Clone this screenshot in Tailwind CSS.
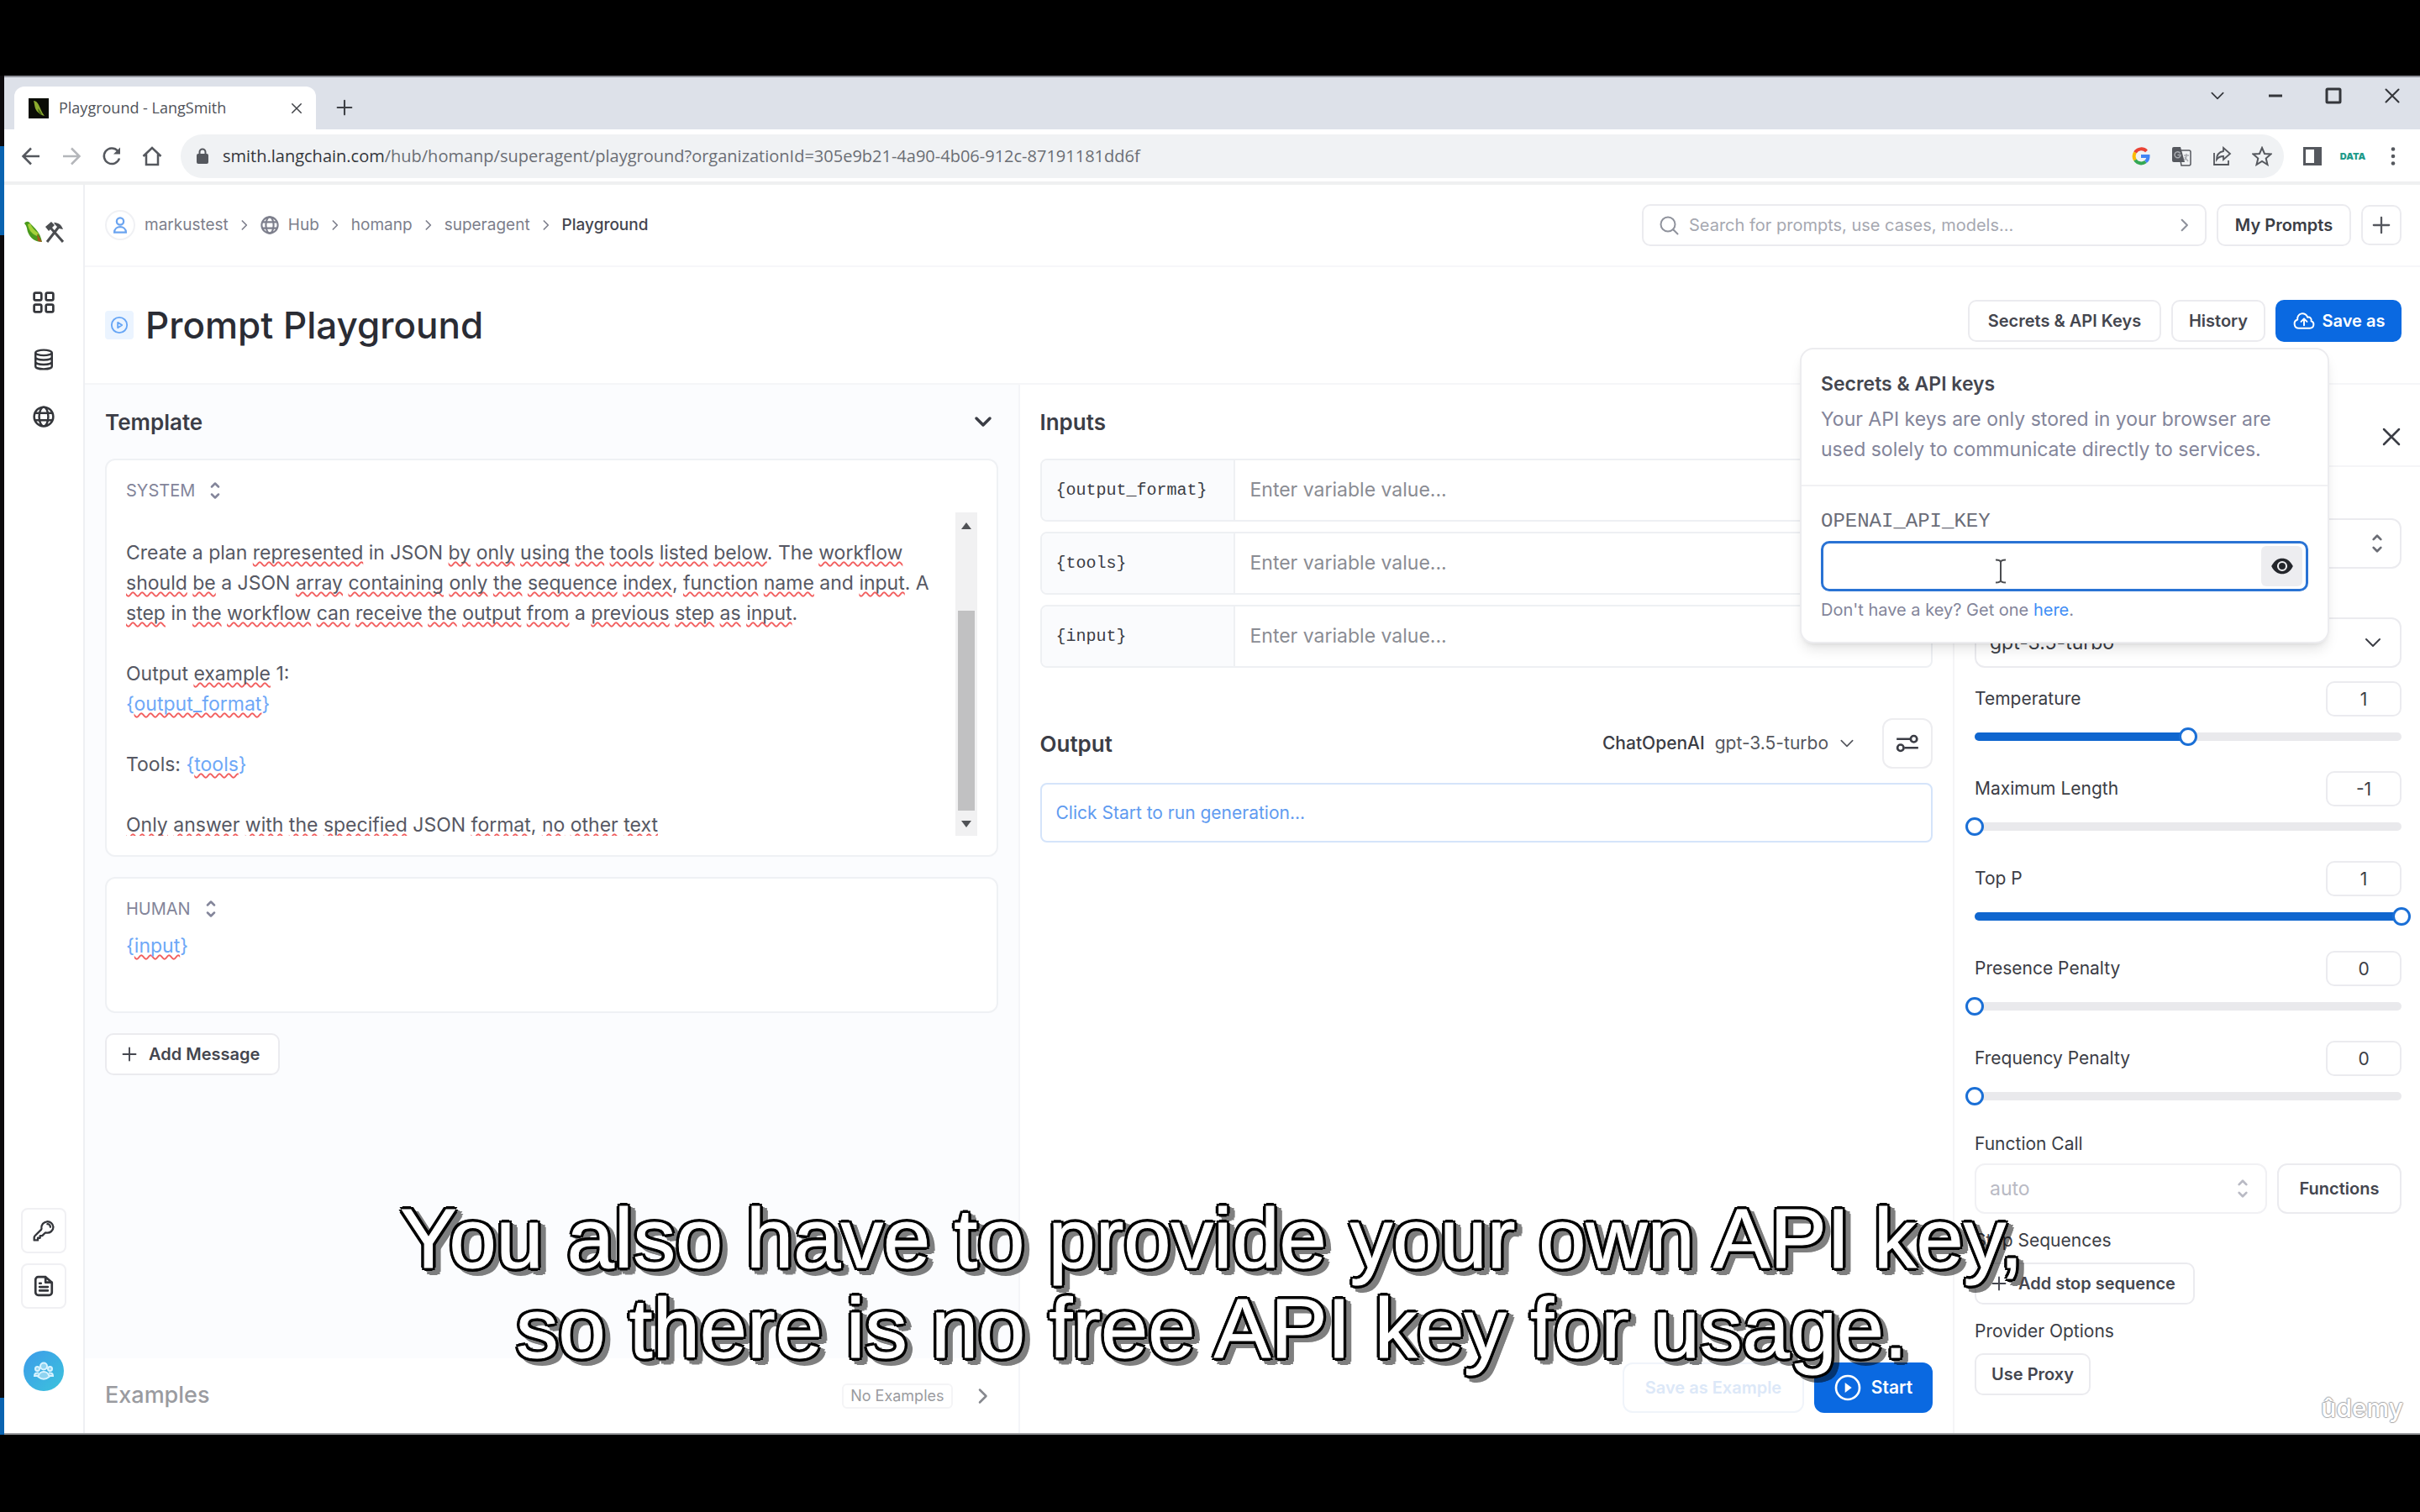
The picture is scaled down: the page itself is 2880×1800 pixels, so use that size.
<!DOCTYPE html>
<html lang="en">
<head>
<meta charset="utf-8">
<title>Playground - LangSmith</title>
<script src="https://cdn.jsdelivr.net/npm/@tailwindcss/browser@4"></script>
</head>
<body class="bg-black">
<svg class="hidden" aria-hidden="true">
  <symbol id="updown" viewBox="0 0 24 24" fill="none" stroke="currentColor" stroke-width="2.500" stroke-linecap="round" stroke-linejoin="round"><path d="M8 7.500 12 3.500l4 4M8 16.500l4 4 4-4"/></symbol>
  <symbol id="down" viewBox="0 0 24 24" fill="none" stroke="currentColor" stroke-width="2" stroke-linecap="round" stroke-linejoin="round"><path d="m4 8 8 8 8-8"/></symbol>
  <symbol id="right" viewBox="0 0 24 24" fill="none" stroke="currentColor" stroke-width="2.500" stroke-linecap="round" stroke-linejoin="round"><path d="m8 4.500 7.500 7.500L8 19.500"/></symbol>
  <symbol id="plus" viewBox="0 0 24 24" fill="none" stroke="currentColor" stroke-width="2.500" stroke-linecap="round"><path d="M12 2v20M2 12h20"/></symbol>
  <symbol id="cross" viewBox="0 0 24 24" fill="none" stroke="currentColor" stroke-width="2.500" stroke-linecap="round"><path d="m3 3 18 18M21 3 3 21"/></symbol>
  <symbol id="globe" viewBox="0 0 24 24" fill="none" stroke="currentColor" stroke-width="2.300"><circle cx="12" cy="12" r="10.500"/><ellipse cx="12" cy="12" rx="5" ry="10.500"/><path d="M2.500 8h19M2.500 16h19"/></symbol>
</svg>
<div class="relative flex min-h-screen flex-col pt-[90px] pb-[92px] font-['Inter',sans-serif] text-[23px] text-[#3b3d45]">
  <div class="flex flex-1">

    <!-- desktop showing behind the browser window -->
    <div class="flex w-[5px] shrink-0 flex-col bg-[#0c0a0d]">
      <div class="mt-[84px] h-[106px] bg-[#0a63b0]"></div>
      <div class="mt-auto h-11 bg-[#0a63b0]"></div>
    </div>

    <div class="flex min-w-0 flex-1 flex-col border-t-2 border-[#8e9099] bg-white">
      <!-- tab strip -->
      <div class="flex h-[62px] items-end justify-between bg-[#dde1e9] font-['Open_Sans','Noto_Sans',sans-serif]">
        <div class="flex h-full items-end pl-3">
          <div class="flex h-[51px] w-[359px] items-center rounded-t-xl bg-white pr-4 pl-[17px]">
            <svg class="h-6 w-6 bg-[#0b0d06]" viewBox="0 0 24 24"><path d="M6 3c4 0 6 4 8 9s3 6 5 9c-4-1-9-4-11-9-1-3-1-6-2-9z" fill="#8cab2e"/><path d="M11 12c3 3 4 5 5 8-3-1-5-4-5-8z" fill="#4d6a1a"/></svg>
            <span class="ml-3 text-[18px] text-[#50535a]">Playground - LangSmith</span>
            <button class="ml-auto" aria-label="Close tab"><svg class="size-[14px] text-[#3f4146]"><use href="#cross"/></svg></button>
          </div>
          <button class="mb-4 ml-6" aria-label="New tab"><svg class="size-5 text-[#3f4146]"><use href="#plus"/></svg></button>
        </div>
        <div class="mb-[30px] flex items-center gap-[50px] pr-[23px] text-[#34363b]">
          <button aria-label="Search tabs"><svg class="size-5"><use href="#down"/></svg></button>
          <button aria-label="Minimize"><svg class="h-5 w-[18px]" viewBox="0 0 18 20"><path d="M1 10h16" stroke="currentColor" stroke-width="3"/></svg></button>
          <button aria-label="Maximize"><svg class="size-5" viewBox="0 0 20 20"><rect x="2" y="2" width="16" height="16" rx="1" fill="none" stroke="currentColor" stroke-width="3"/></svg></button>
          <button aria-label="Close"><svg class="size-5"><use href="#cross"/></svg></button>
        </div>
      </div>

      <!-- address bar -->
      <div class="flex h-[66px] items-center border-b-4 border-[#eff0f1] pt-[2px] pr-5 pl-5 text-[#55585e]">
        <div class="flex w-[190px] shrink-0 items-center gap-6">
          <button aria-label="Back"><svg class="size-6" viewBox="0 0 24 24" fill="none" stroke="currentColor" stroke-width="2.500"><path d="M22 12H3M12 2.500 2.500 12l9.500 9.500"/></svg></button>
          <button aria-label="Forward" class="text-[#b4b6ba]"><svg class="size-6" viewBox="0 0 24 24" fill="none" stroke="currentColor" stroke-width="2.500"><path d="M2 12h19M12 2.500l9.500 9.500-9.500 9.500"/></svg></button>
          <button aria-label="Reload"><svg class="size-6" viewBox="0 0 24 24" fill="none" stroke="currentColor" stroke-width="2.500"><path d="M21 14.500A9.300 9.300 0 1 1 19 5.500"/><path d="M22 1.500v8h-8z" fill="currentColor" stroke="none"/></svg></button>
          <button aria-label="Home"><svg class="size-6" viewBox="0 0 24 24" fill="none" stroke="currentColor" stroke-width="2.500"><path d="M1.500 12 12 2l10.500 10M5 9.500V22h14V9.500"/></svg></button>
        </div>
        <div class="flex h-[52px] min-w-0 flex-1 items-center rounded-full bg-[#f0f2f4] pr-[14px] pl-[18px]">
          <svg class="h-5 w-4 shrink-0" viewBox="0 0 16 20"><rect x="1" y="7" width="14" height="12" rx="2" fill="currentColor"/><path d="M4.500 8V5a3.500 3.500 0 0 1 7 0v3" fill="none" stroke="currentColor" stroke-width="2"/></svg>
          <p class="ml-4 flex-1 truncate font-['Open_Sans','Noto_Sans',sans-serif] text-[20px] text-[#6b6e74]"><span class="text-[#34363b]">smith.langchain.com</span>/hub/homanp/superagent/playground?organizationId=305e9b21-4a90-4b06-912c-87191181dd6f</p>
          <div class="flex items-center gap-6">
            <svg class="size-6" viewBox="0 0 24 24" fill="none" stroke-width="4"><path d="M18.500 6A8.500 8.500 0 0 0 5 7.500" stroke="#ea4335"/><path d="M5 7.500a8.500 8.500 0 0 0 0 9" stroke="#fbbc05"/><path d="M5 16.500a8.500 8.500 0 0 0 12.500 2" stroke="#34a853"/><path d="M17.500 18.500a8 8 0 0 0 3-6.500H12" stroke="#4285f4"/></svg>
            <svg class="size-6" viewBox="0 0 24 24"><path d="M9 5h12a2 2 0 0 1 2 2v14a2 2 0 0 1-2 2h-9z" fill="none" stroke="currentColor" stroke-width="1.500"/><path d="M3 1h8l5 18H3a2 2 0 0 1-2-2V3a2 2 0 0 1 2-2z" fill="currentColor"/><path d="M10.500 8.500A3.500 3.500 0 1 0 11 10.500H7.500M15 11h6M18 9v2c0 3-1.500 5-3 6M16 13l4 5" fill="none" stroke="#aaadb2" stroke-width="1.500"/></svg>
            <svg class="size-6" viewBox="0 0 24 24" fill="none" stroke="currentColor" stroke-width="1.800"><path d="M3 8v14h17v-5"/><path d="M14 2l8 7-8 7v-4c-4 0-6 1-8 4 0-6 3-9 8-10z"/></svg>
            <svg class="size-6" viewBox="0 0 24 24" fill="none" stroke="currentColor" stroke-width="2"><path d="m12 2 3 7 7.500.500-5.800 5 1.800 7.500-6.500-4-6.500 4 1.800-7.500-5.800-5L9 9z"/></svg>
          </div>
        </div>
        <div class="ml-[22px] flex items-center gap-5">
          <svg class="size-6" viewBox="0 0 24 24"><rect x="2.500" y="2.500" width="19" height="19" fill="none" stroke="currentColor" stroke-width="3"/><path d="M14 2h8v20h-8z" fill="currentColor"/></svg>
          <span class="w-8 text-center text-[11px] leading-3 font-black text-[#1d9a8a]">DATA</span>
          <svg class="h-6 w-6" viewBox="0 0 24 24" fill="currentColor"><circle cx="12" cy="3.500" r="2.300"/><circle cx="12" cy="12" r="2.300"/><circle cx="12" cy="20.500" r="2.300"/></svg>
        </div>
      </div>

      <div class="flex flex-1">
        <!-- sidebar -->
        <nav class="flex w-24 shrink-0 flex-col items-center border-r-2 border-[#eef0f3] pt-[38px] pb-[50px] text-[#34363b]">
          <svg class="h-9 w-12" viewBox="0 0 48 36"><path d="M1 8c2-3 5-3 7 0 6 6 12 11 14 22-8 0-14-4-17-12C4 14 4 11 1 8z" fill="#4a9a1c"/><path d="M8 8c2 5 5 8 10 12l-2 3C9 20 6 15 5 9z" fill="#a5d13a"/><path d="M16 20l6 10-5-1z" fill="#a8551c"/><path d="m28 30 14-18M47 30 32 13" stroke="#4b4d50" stroke-width="3"/><path d="m26 12 7-6 4 4-7 7zM36 7c5 0 9 2 11 8l-5-1-4-4z" fill="#4b4d50"/></svg>
          <div class="mt-[53px] flex flex-col gap-[42px]">
            <a href="#" aria-label="Projects"><svg class="size-[26px]" viewBox="0 0 24 24" fill="none" stroke="currentColor" stroke-width="2.500"><rect x="1.500" y="1.500" width="8" height="8" rx="1.500"/><rect x="14.500" y="1.500" width="8" height="8" rx="1.500"/><rect x="1.500" y="14.500" width="8" height="8" rx="1.500"/><rect x="14.500" y="14.500" width="8" height="8" rx="1.500"/></svg></a>
            <a href="#" aria-label="Datasets"><svg class="size-[26px]" viewBox="0 0 24 24" fill="none" stroke="currentColor" stroke-width="2.300"><ellipse cx="12" cy="4.500" rx="9" ry="3"/><path d="M3 4.500v15c0 4 18 4 18 0v-15M3 9.500c0 4 18 4 18 0M3 14.500c0 4 18 4 18 0"/></svg></a>
            <a href="#" aria-label="Hub"><svg class="size-[26px]"><use href="#globe"/></svg></a>
          </div>
          <div class="mt-auto flex flex-col items-center gap-3">
            <button class="flex h-[54px] w-[54px] items-center justify-center rounded-lg border-2 border-[#f0f0f3]" aria-label="API keys"><svg class="size-7" viewBox="0 0 24 24" fill="none" stroke="currentColor" stroke-width="2" stroke-linecap="round" stroke-linejoin="round"><path d="M15.800 5.300a3 3 0 0 1 3 3m3 0a6 6 0 0 1-7 5.900c-.600-.100-1.200 0-1.600.400L10.500 17.300H8.300v2.200H6v2.300H2.300v-2.800c0-.600.200-1.200.700-1.600l6.400-6.400c.400-.400.500-1 .400-1.600a6 6 0 1 1 12-1.100z"/></svg></button>
            <button class="flex h-[54px] w-[54px] items-center justify-center rounded-lg border-2 border-[#f0f0f3]" aria-label="Documentation"><svg class="size-[26px]" viewBox="0 0 24 24" fill="none" stroke="currentColor" stroke-width="2.500" stroke-linecap="round" stroke-linejoin="round"><path d="M14 2H6a3 3 0 0 0-3 3v14a3 3 0 0 0 3 3h12a3 3 0 0 0 3-3V8zM14 2v6h7M7.500 9H9M7.500 13h9M7.500 17h9"/></svg></button>
            <button class="mt-[38px] flex size-12 items-center justify-center rounded-full bg-linear-to-br from-[#3d9be9] to-[#3cc3dc]" aria-label="Account"><svg class="size-6" viewBox="0 0 24 24" fill="#8fd3f0" stroke="#d9f3ff" stroke-width="2"><circle cx="4.500" cy="9.500" r="2.500"/><circle cx="19.500" cy="9.500" r="2.500"/><path d="M6 18H1c0-3 2-4 5-3.500M18 18h5c0-3-2-4-5-3.500"/><path d="M5.500 19c1-8 12-8 13 0-4 3.500-9 3.500-13 0z"/><circle cx="12" cy="6.500" r="4"/></svg></button>
          </div>
        </nav>

        <div class="flex min-w-0 flex-1 flex-col">
          <!-- breadcrumb header -->
          <header class="flex h-[98px] items-center justify-between border-b-2 border-[#f7f7f9] pr-[22px] pl-6">
            <nav class="flex items-center gap-[11px] text-[19px] text-[#7d7f8c]" aria-label="Breadcrumb">
              <span class="flex size-9 items-center justify-center rounded-full border-2 border-[#f0f1f4]"><svg class="size-[22px]" viewBox="0 0 24 24" fill="none" stroke="#6ba4f0" stroke-width="2.500"><circle cx="12" cy="7" r="4.500"/><path d="M4.500 21.500c0-9.500 15-9.500 15 0z"/></svg></span>
              <a href="#">markustest</a>
              <svg class="size-4"><use href="#right"/></svg>
              <a href="#" class="flex items-center gap-[11px]"><svg class="size-[22px]"><use href="#globe"/></svg>Hub</a>
              <svg class="size-4"><use href="#right"/></svg>
              <a href="#">homanp</a>
              <svg class="size-4"><use href="#right"/></svg>
              <a href="#">superagent</a>
              <svg class="size-4"><use href="#right"/></svg>
              <span class="font-medium text-[#44464f]">Playground</span>
            </nav>
            <div class="flex items-center gap-3">
              <label class="flex h-[50px] w-[672px] items-center rounded-[10px] border-2 border-[#ebebef] px-[18px] text-[#8f929c]">
                <svg class="mr-3 size-6 shrink-0" viewBox="0 0 24 24" fill="none" stroke="currentColor" stroke-width="2" stroke-linecap="round"><circle cx="11" cy="11" r="8.500"/><path d="m17.500 17.500 5 5"/></svg>
                <input type="search" aria-label="Search" placeholder="Search for prompts, use cases, models..." class="min-w-0 flex-1 text-[20px] outline-none placeholder:text-[#a6a8b1]">
                <svg class="-mr-1 size-5"><use href="#right"/></svg>
              </label>
              <button class="h-[50px] w-40 rounded-[10px] border-2 border-[#ebebef] text-[20px] font-semibold">My Prompts</button>
              <button class="flex size-[48px] items-center justify-center rounded-[10px] border-2 border-[#ebebef] text-[#55575e]" aria-label="New prompt"><svg class="size-[22px]"><use href="#plus"/></svg></button>
            </div>
          </header>

          <!-- title row -->
          <div class="relative z-10 flex h-[140px] items-center justify-between border-b-2 border-[#f5f6f8] pr-[22px] pl-6">
            <div class="flex items-center gap-[14px]">
              <span class="flex size-[34px] items-center justify-center rounded bg-[#ebf4ff]"><svg class="size-[22px]" viewBox="0 0 24 24" fill="none" stroke="#66a5f5" stroke-width="2" stroke-linejoin="round"><circle cx="12" cy="12" r="10"/><path d="m10 8.500 5.500 3.500-5.500 3.500z"/></svg></span>
              <h1 class="text-[44px] leading-[56px] font-medium text-[#2a2c34]">Prompt Playground</h1>
            </div>
            <div class="mb-[10px] flex gap-3 text-[20px] font-semibold">
              <button class="h-[50px] w-[230px] rounded-[10px] border-2 border-[#ebebef] text-[#44464f]">Secrets &amp; API Keys</button>
              <button class="h-[50px] w-28 rounded-[10px] border-2 border-[#ebebef] text-[#44464f]">History</button>
              <button class="flex h-[50px] w-[150px] items-center justify-center gap-2 rounded-[10px] bg-[#0a69e1] text-white"><svg class="size-7" viewBox="0 0 24 24" fill="none" stroke="currentColor" stroke-width="1.700" stroke-linecap="round" stroke-linejoin="round"><path d="M12 16.500V9.750m0 0 3 3m-3-3-3 3M6.750 19.500a4.500 4.500 0 0 1-1.410-8.775 5.250 5.250 0 0 1 10.233-2.330 3 3 0 0 1 3.758 3.848A3.752 3.752 0 0 1 18 19.500H6.750Z"/></svg>Save as</button>
            </div>

            <!-- secrets popover -->
            <section class="absolute top-24 right-[108px] w-[630px] rounded-2xl border-2 border-[#ececef] bg-white shadow-lg">
              <div class="border-b-2 border-[#f1f1f3] px-[23px] pt-[23px] pb-6">
                <h2 class="leading-9 font-semibold text-[#44464f]">Secrets &amp; API keys</h2>
                <p class="mt-[6px] leading-9 text-[#83859a]">Your API keys are only stored in your browser are<br>used solely to communicate directly to services.</p>
              </div>
              <div class="px-[23px] pt-6 pb-5">
                <label for="apikey" class="block font-['Liberation_Mono',monospace] text-[24px] leading-9 text-[#6b6d78]">OPENAI_API_KEY</label>
                <div class="mt-[5px] flex h-[60px] items-center rounded-[10px] border-[3px] border-[#2a73d4] pr-1">
                  <input id="apikey" type="text" class="h-full min-w-0 flex-1 px-4 outline-none">
                  <button class="flex h-12 w-[49px] items-center justify-center rounded-md bg-[#ededf0]" aria-label="Show key"><svg class="size-7" viewBox="0 0 24 24"><path d="M1 12C4 6 8 4 12 4s8 2 11 8c-3 6-7 8-11 8s-8-2-11-8z" fill="#24262b"/><circle cx="12" cy="12" r="4.300" fill="none" stroke="#ededf0" stroke-width="1.800"/></svg></button>
                </div>
                <p class="mt-1 text-[20px] leading-9 text-[#83859a]">Don't have a key? Get one <a href="#" class="text-[#3f8df5]">here</a>.</p>
              </div>
              <svg class="absolute top-[248px] left-[229px] h-8 w-4" viewBox="0 0 16 32" fill="none" stroke="#4b4d50" stroke-width="2"><path d="M2 2.500c3 0 6 0 6 3v21c0 3-3 3-6 3M14 2.500c-3 0-6 0-6 3v21c0 3 3 3 6 3"/></svg>
            </section>
          </div>

          <main class="grid flex-1 grid-cols-[minmax(0,1fr)_minmax(0,1fr)_554px]">
            <!-- template -->
            <section class="flex flex-col border-r-2 border-[#f4f5f8] bg-[#fbfcfe]">
              <div class="flex flex-1 flex-col gap-6 px-6 pt-6">
                <div class="flex h-10 items-center justify-between pr-[6px]">
                  <h2 class="text-[26px] font-semibold text-[#3b3d46]">Template</h2>
                  <button aria-label="Collapse template"><svg class="size-6" viewBox="0 0 24 24" fill="none" stroke="currentColor" stroke-width="3.500" stroke-linecap="round" stroke-linejoin="round"><path d="m4 8 8 8 8-8"/></svg></button>
                </div>
                <article class="rounded-xl border-2 border-[#eff1f4] bg-white px-[23px] pt-[20px] pb-[23px]">
                  <button class="flex h-8 items-center gap-3 text-[20px] text-[#83859a]">SYSTEM <svg class="size-6"><use href="#updown"/></svg></button>
                  <div class="mt-[10px] flex h-[385px]">
                    <div role="textbox" aria-label="System message" class="flex-1 overflow-hidden pt-[30px] leading-9 text-[#565863] [&_b]:font-normal [&_b]:text-[#6ea8f7] [&_u]:decoration-[#f25f5f] [&_u]:decoration-wavy [&_u]:decoration-2 [&_u]:underline-offset-2 [&_u]:[text-decoration-skip-ink:none]">
                      <p>Create a plan <u>represented</u> in JSON <u>by</u> <u>only</u> <u>using</u> <u>the</u> <u>tools</u> <u>listed</u> <u>below</u>. The <u>workflow</u><br><u>should</u> <u>be</u> a JSON <u>array</u> <u>containing</u> <u>only</u> <u>the</u> <u>sequence</u> <u>index</u>, <u>function</u> <u>name</u> and <u>input</u>. A<br><u>step</u> in <u>the</u> <u>workflow</u> <u>can</u> <u>receive</u> <u>the</u> <u>output</u> <u>from</u> a <u>previous</u> <u>step</u> <u>as</u> <u>input</u>.</p>
                      <p class="mt-9">Output <u>example</u> 1:<br><b>{<u>output_format</u>}</b></p>
                      <p class="mt-9">Tools: <b>{<u>tools</u>}</b></p>
                      <p class="mt-9"><u>Only</u> <u>answer</u> <u>with</u> <u>the</u> <u>specified</u> JSON <u>format</u>, <u>no</u> <u>other</u> <u>text</u></p>
                    </div>
                    <div class="flex w-[26px] flex-col items-center bg-[#f1f1f2] text-[#505256]">
                      <svg class="mt-3 h-2 w-3" viewBox="0 0 12 8"><path d="M0 8h12L6 0z" fill="currentColor"/></svg>
                      <div class="mt-[97px] h-[238px] w-5 bg-[#c1c1c2]"></div>
                      <svg class="mt-3 h-2 w-3" viewBox="0 0 12 8"><path d="M0 0h12L6 8z" fill="currentColor"/></svg>
                    </div>
                  </div>
                </article>
                <article class="min-h-[162px] rounded-xl border-2 border-[#eff1f4] bg-white px-[23px] pt-[20px]">
                  <button class="flex h-8 items-center gap-3 text-[20px] text-[#83859a]">HUMAN <svg class="size-6"><use href="#updown"/></svg></button>
                  <p class="mt-[10px] leading-9 text-[#6ea8f7]">{<u class="decoration-[#f25f5f] decoration-wavy decoration-2 underline-offset-2 [text-decoration-skip-ink:none]">input</u>}</p>
                </article>
                <button class="flex h-[50px] w-[208px] items-center gap-[14px] rounded-[10px] border-2 border-[#ebebef] bg-white px-[18px] text-[20px] font-semibold whitespace-nowrap text-[#44464f]"><svg class="size-[18px] shrink-0"><use href="#plus"/></svg>Add Message</button>
              </div>
              <div class="flex h-[89px] items-center bg-white px-6 text-[#9a9ba0]">
                <h2 class="text-[27px] font-medium">Examples</h2>
                <span class="ml-auto rounded-md border-2 border-[#f4f4f6] px-2 text-[18px] leading-[26px]">No Examples</span>
                <button class="mr-[6px] ml-6" aria-label="Open examples"><svg class="size-6 text-[#86888e]"><use href="#right"/></svg></button>
              </div>
            </section>

            <!-- inputs and output -->
            <section class="flex flex-col border-r-2 border-[#f5f5f7] px-6 pt-6 pb-6">
              <h2 class="flex h-10 items-center text-[26px] font-semibold text-[#3b3d46]">Inputs</h2>
              <div class="mt-6 flex flex-col gap-3">
                <div class="flex h-[75px] rounded-lg border-2 border-[#eef0f3]">
                  <label for="v1" class="flex w-[230px] items-center rounded-l-md border-r-2 border-[#eef0f3] bg-[#fafbfd] pl-[17px] font-['Liberation_Mono',monospace] text-[20px]">{output_format}</label>
                  <input id="v1" placeholder="Enter variable value..." class="min-w-0 flex-1 px-[18px] outline-none placeholder:text-[#8a8c93]">
                </div>
                <div class="flex h-[75px] rounded-lg border-2 border-[#eef0f3]">
                  <label for="v2" class="flex w-[230px] items-center rounded-l-md border-r-2 border-[#eef0f3] bg-[#fafbfd] pl-[17px] font-['Liberation_Mono',monospace] text-[20px]">{tools}</label>
                  <input id="v2" placeholder="Enter variable value..." class="min-w-0 flex-1 px-[18px] outline-none placeholder:text-[#8a8c93]">
                </div>
                <div class="flex h-[75px] rounded-lg border-2 border-[#eef0f3]">
                  <label for="v3" class="flex w-[230px] items-center rounded-l-md border-r-2 border-[#eef0f3] bg-[#fafbfd] pl-[17px] font-['Liberation_Mono',monospace] text-[20px]">{input}</label>
                  <input id="v3" placeholder="Enter variable value..." class="min-w-0 flex-1 px-[18px] outline-none placeholder:text-[#8a8c93]">
                </div>
              </div>
              <div class="mt-[60px] flex h-[60px] items-center">
                <h2 class="text-[26px] font-semibold text-[#3b3d46]">Output</h2>
                <button class="ml-auto flex items-center gap-3 text-[21px] text-[#55575e]"><span class="font-medium text-[#3b3d45]">ChatOpenAI</span>gpt-3.5-turbo<svg class="size-5"><use href="#down"/></svg></button>
                <button class="ml-8 flex size-[60px] items-center justify-center rounded-xl border-2 border-[#ededf0]" aria-label="Model settings"><svg class="size-7" viewBox="0 0 24 24" fill="none" stroke="currentColor" stroke-width="2.300"><path d="M1 7.500h14M9 16.500h14"/><circle cx="18.500" cy="7.500" r="3.200"/><circle cx="5" cy="16.500" r="3.200"/></svg></button>
              </div>
              <div class="mt-[17px] flex h-[71px] items-center rounded-lg border-2 border-[#d5e4fa] px-[17px] text-[21px] text-[#5f9bf0]">Click Start to run generation...</div>
              <div class="mt-auto flex justify-end gap-3 font-semibold">
                <button class="h-[60px] w-[216px] rounded-xl border-2 border-[#f0f4fa] text-[20px] text-[#dce8f8]">Save as Example</button>
                <button class="flex h-[60px] w-[141px] items-center justify-center gap-3 rounded-xl bg-[#0a69e1] text-[21px] text-white"><svg class="size-8" viewBox="0 0 24 24"><circle cx="12" cy="12" r="10.500" fill="none" stroke="currentColor" stroke-width="2"/><path d="M9.500 7.500v9l6-4.500z" fill="currentColor"/></svg>Start</button>
              </div>
            </section>

            <!-- model settings -->
            <aside class="text-[21px]">
              <div class="flex h-[98px] items-center justify-end border-b-2 border-[#f5f5f7] pt-7 pr-[22px]"><button aria-label="Close settings"><svg class="size-6"><use href="#cross"/></svg></button></div>
              <div class="flex flex-col gap-4 pt-[61px] pr-[22px] pb-6 pl-6">
                <div class="grid items-center">
                  <select aria-label="Provider" class="col-start-1 row-start-1 h-[60px] appearance-none rounded-xl border-2 border-[#ebebef] px-4"><option>ChatOpenAI</option></select>
                  <svg class="pointer-events-none col-start-1 row-start-1 mr-4 size-[26px] justify-self-end text-[#6b6d75]"><use href="#updown"/></svg>
                </div>
                <div class="mt-[42px] grid items-center">
                  <select aria-label="Model" class="col-start-1 row-start-1 h-[60px] appearance-none rounded-xl border-2 border-[#ebebef] px-4 text-[23px]"><option>gpt-3.5-turbo</option></select>
                  <svg class="pointer-events-none col-start-1 row-start-1 mr-[22px] size-6 justify-self-end"><use href="#down"/></svg>
                </div>
                <div id="sliders" class="flex flex-col gap-[31px] pt-[1px]"></div>
                <div class="mt-[14px] flex flex-col gap-[7px]">
                  <label for="fncall" class="leading-8">Function Call</label>
                  <div class="flex gap-3">
                    <div class="grid flex-1 items-center text-[#b9bac4]">
                      <select id="fncall" class="col-start-1 row-start-1 h-[60px] appearance-none rounded-xl border-2 border-[#f1f1f4] px-4 text-[23px]"><option>auto</option></select>
                      <svg class="pointer-events-none col-start-1 row-start-1 mr-4 size-[26px] justify-self-end"><use href="#updown"/></svg>
                    </div>
                    <button class="h-[60px] w-[148px] rounded-xl border-2 border-[#ebebef] text-[20px] font-semibold text-[#44464f]">Functions</button>
                  </div>
                </div>
                <div class="flex flex-col items-start gap-[10px]">
                  <span class="leading-8">Stop Sequences</span>
                  <button class="flex h-[50px] w-[262px] items-center gap-[14px] rounded-[10px] border-2 border-[#ebebef] px-[18px] text-[20px] font-semibold whitespace-nowrap text-[#44464f]"><svg class="size-[18px] shrink-0"><use href="#plus"/></svg>Add stop sequence</button>
                </div>
                <div class="flex flex-col items-start gap-[10px]">
                  <span class="leading-8">Provider Options</span>
                  <button class="h-[50px] w-[138px] rounded-[10px] border-2 border-[#ebebef] text-[20px] font-semibold text-[#44464f]">Use Proxy</button>
                </div>
              </div>
            </aside>
          </main>
        </div>
      </div>
      <div class="h-[2px] bg-[#9a9b9e]"></div>
    </div>
  </div>

  <!-- video caption and watermark -->
  <p class="pointer-events-none absolute inset-x-0 bottom-[165px] z-20 pl-1 text-center font-['Liberation_Sans',Arial,sans-serif] text-[101px] leading-[107px] text-white [-webkit-text-stroke:1px_#fff] [filter:drop-shadow(6px_5px_0_rgba(0,0,0,0.5))] [text-shadow:4px_0_0_#000,-4px_0_0_#000,0_4px_0_#000,0_-4px_0_#000,3px_3px_0_#000,-3px_3px_0_#000,3px_-3px_0_#000,-3px_-3px_0_#000]">You also have to provide your own API key,<br>so there is no free API key for usage.</p>
  <span class="pointer-events-none absolute right-5 bottom-[104px] z-20 text-[30px] leading-10 font-medium text-white [text-shadow:1px_0_1px_#a8a8aa,-1px_0_1px_#a8a8aa,0_1px_1px_#a8a8aa,0_-1px_1px_#a8a8aa]">ûdemy</span>
</div>
<script>
const params = [['Temperature', '1', 50], ['Maximum Length', '-1', 0], ['Top P', '1', 100], ['Presence Penalty', '0', 0], ['Frequency Penalty', '0', 0]];
document.getElementById('sliders').innerHTML = params.map(([name, value, pct], i) => `
  <div class="flex flex-col gap-[14px]">
    <div class="flex h-10 items-center justify-between">
      <label for="s${i}">${name}</label>
      <input aria-label="${name} value" value="${value}" class="h-[42px] w-[90px] rounded-[10px] border-2 border-[#ebebef] text-center outline-none">
    </div>
    <div class="grid items-center">
      <div class="col-start-1 row-start-1 h-[10px] rounded-full bg-[#e9e9ec]"><div class="h-full rounded-full bg-[#0f66cf]" style="width:${pct}%"></div></div>
      <input id="s${i}" type="range" min="0" max="100" value="${pct}" class="col-start-1 row-start-1 -mx-[11px] h-[22px] appearance-none bg-transparent [&::-webkit-slider-thumb]:size-[22px] [&::-webkit-slider-thumb]:appearance-none [&::-webkit-slider-thumb]:rounded-full [&::-webkit-slider-thumb]:border-[3px] [&::-webkit-slider-thumb]:border-[#1a6fd6] [&::-webkit-slider-thumb]:bg-white">
    </div>
  </div>`).join('');
</script>
</body>
</html>
